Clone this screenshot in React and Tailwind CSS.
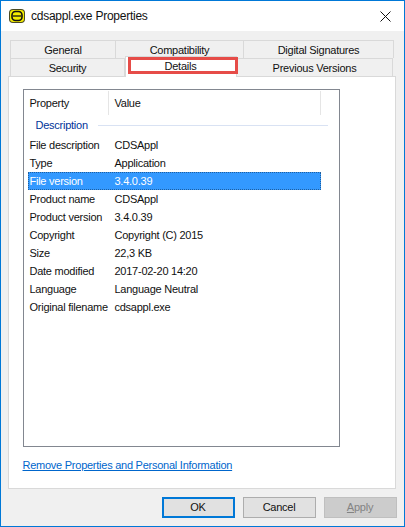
import React from "react";

const rows = [
  ["File description", "CDSAppl"],
  ["Type", "Application"],
  ["File version", "3.4.0.39"],
  ["Product name", "CDSAppl"],
  ["Product version", "3.4.0.39"],
  ["Copyright", "Copyright (C) 2015"],
  ["Size", "22,3 KB"],
  ["Date modified", "2017-02-20 14:20"],
  ["Language", "Language Neutral"],
  ["Original filename", "cdsappl.exe"],
];

function AppIcon() {
  return (
    <svg width="16" height="16" viewBox="0 0 16 16" className="shrink-0">
      <rect x="0" y="1" width="16" height="14" rx="4" fill="#4a4a22" />
      <rect x="1" y="2" width="14" height="12" rx="3" fill="#f4ec00" />
      <rect x="3" y="3.5" width="10" height="9" rx="3.5" fill="none" stroke="#111" strokeWidth="1.6" />
      <path d="M4 8h8" stroke="#111" strokeWidth="1.3" />
    </svg>
  );
}

function Tab({ label, className }) {
  return (
    <div className={`flex h-[18px] items-center justify-center border-t border-r border-[#d9d9d9] bg-[#f0f0f0] pt-[2px] pl-[1px] ${className}`}>
      {label}
    </div>
  );
}

function Button({ children, className }) {
  return (
    <div className={`flex h-[21px] w-[73px] items-center justify-center ${className}`}>
      {children}
    </div>
  );
}

export default function App() {
  return (
    <div
      className="flex h-[527px] w-[405px] flex-col border border-[#0078d7] bg-[#f0f0f0] text-[11px] tracking-[-0.25px] text-[#111] [font-family:'Liberation_Sans',sans-serif]"
    >
      {/* Title bar */}
      <div className="flex h-[30px] shrink-0 items-center bg-white pl-[8px] pr-[13px]">
        <AppIcon />
        <span className="ml-[6px] text-[12px]">cdsappl.exe Properties</span>
        <svg width="11" height="11" viewBox="0 0 11 11" className="ml-auto">
          <path d="M0.5 0.5l10 10M10.5 0.5l-10 10" stroke="#111" strokeWidth="1" />
        </svg>
      </div>

      <div className="flex min-h-0 flex-1 flex-col pl-[6.5px] pr-[8.5px] pt-[9px]">
        {/* Tabs */}
        <div className="ml-[2px] mr-[2px] flex border-l border-[#d9d9d9]">
          <Tab label="General" className="w-[105px]" />
          <Tab label="Compatibility" className="w-[128px]" />
          <Tab label="Digital Signatures" className="w-[150px]" />
        </div>
        <div className="relative ml-[2px] mr-[2px] flex">
          <Tab label="Security" className="w-[115px] border-l" />
          <div className="relative z-10 -mt-[2px] mb-[-1px] flex h-[21px] w-[112px] justify-center border-x border-t border-[#d9d9d9] bg-white pt-[1px]">
            Details
            <div className="absolute left-[2px] top-[0px] h-[17px] w-[110px] border-[3px] border-[#e64c48]" />
          </div>
          <Tab label="Previous Versions" className="w-[156px]" />
        </div>

        {/* Panel */}
        <div className="flex h-[413px] flex-col border border-[#d9d9d9] bg-white pl-[14px] pt-[12px]">
          <div className="h-[358px] w-[317px] border border-[#828790] pl-[4px]">
            <div className="flex h-[26px] items-center">
              <div className="flex h-[24px] w-[81px] items-center border-r border-[#e5e5e5] pl-[2px]">Property</div>
              <div className="flex h-[24px] w-[212px] items-center border-r border-[#e5e5e5] pl-[6px]">Value</div>
            </div>
            <div className="flex h-[19px] items-center">
              <span className="pl-[8px] text-[#003399]">Description</span>
              <div className="ml-[10px] mr-[11px] h-px flex-1 bg-[#d9e2f3]" />
            </div>
            <div className="pt-[1px]">
              {rows.map(([name, value]) => (
                <div
                  key={name}
                  className={
                    name === "File version"
                      ? "flex h-[18px] w-[293px] items-center bg-[#3399ff] text-white outline-1 -outline-offset-1 outline-dotted outline-[#1f5f9f]"
                      : "flex h-[18px] w-[293px] items-center"
                  }
                >
                  <span className="w-[87px] shrink-0 pl-[2px] whitespace-nowrap">{name}</span>
                  <span className="whitespace-nowrap">{value}</span>
                </div>
              ))}
            </div>
          </div>
          <span className="mt-[10px] w-fit text-[#0066cc] underline">Remove Properties and Personal Information</span>
        </div>

        {/* Dialog buttons */}
        <div className="mt-[8px] -mr-[1px] flex justify-end gap-[8px]">
          <Button className="border-2 border-[#0078d7] bg-[#e1e1e1]">OK</Button>
          <Button className="border border-[#adadad] bg-[#e1e1e1]">Cancel</Button>
          <Button className="border border-[#bfbfbf] bg-[#cccccc] text-[#838383]">
            <span><span className="underline">A</span>pply</span>
          </Button>
        </div>
      </div>
    </div>
  );
}
